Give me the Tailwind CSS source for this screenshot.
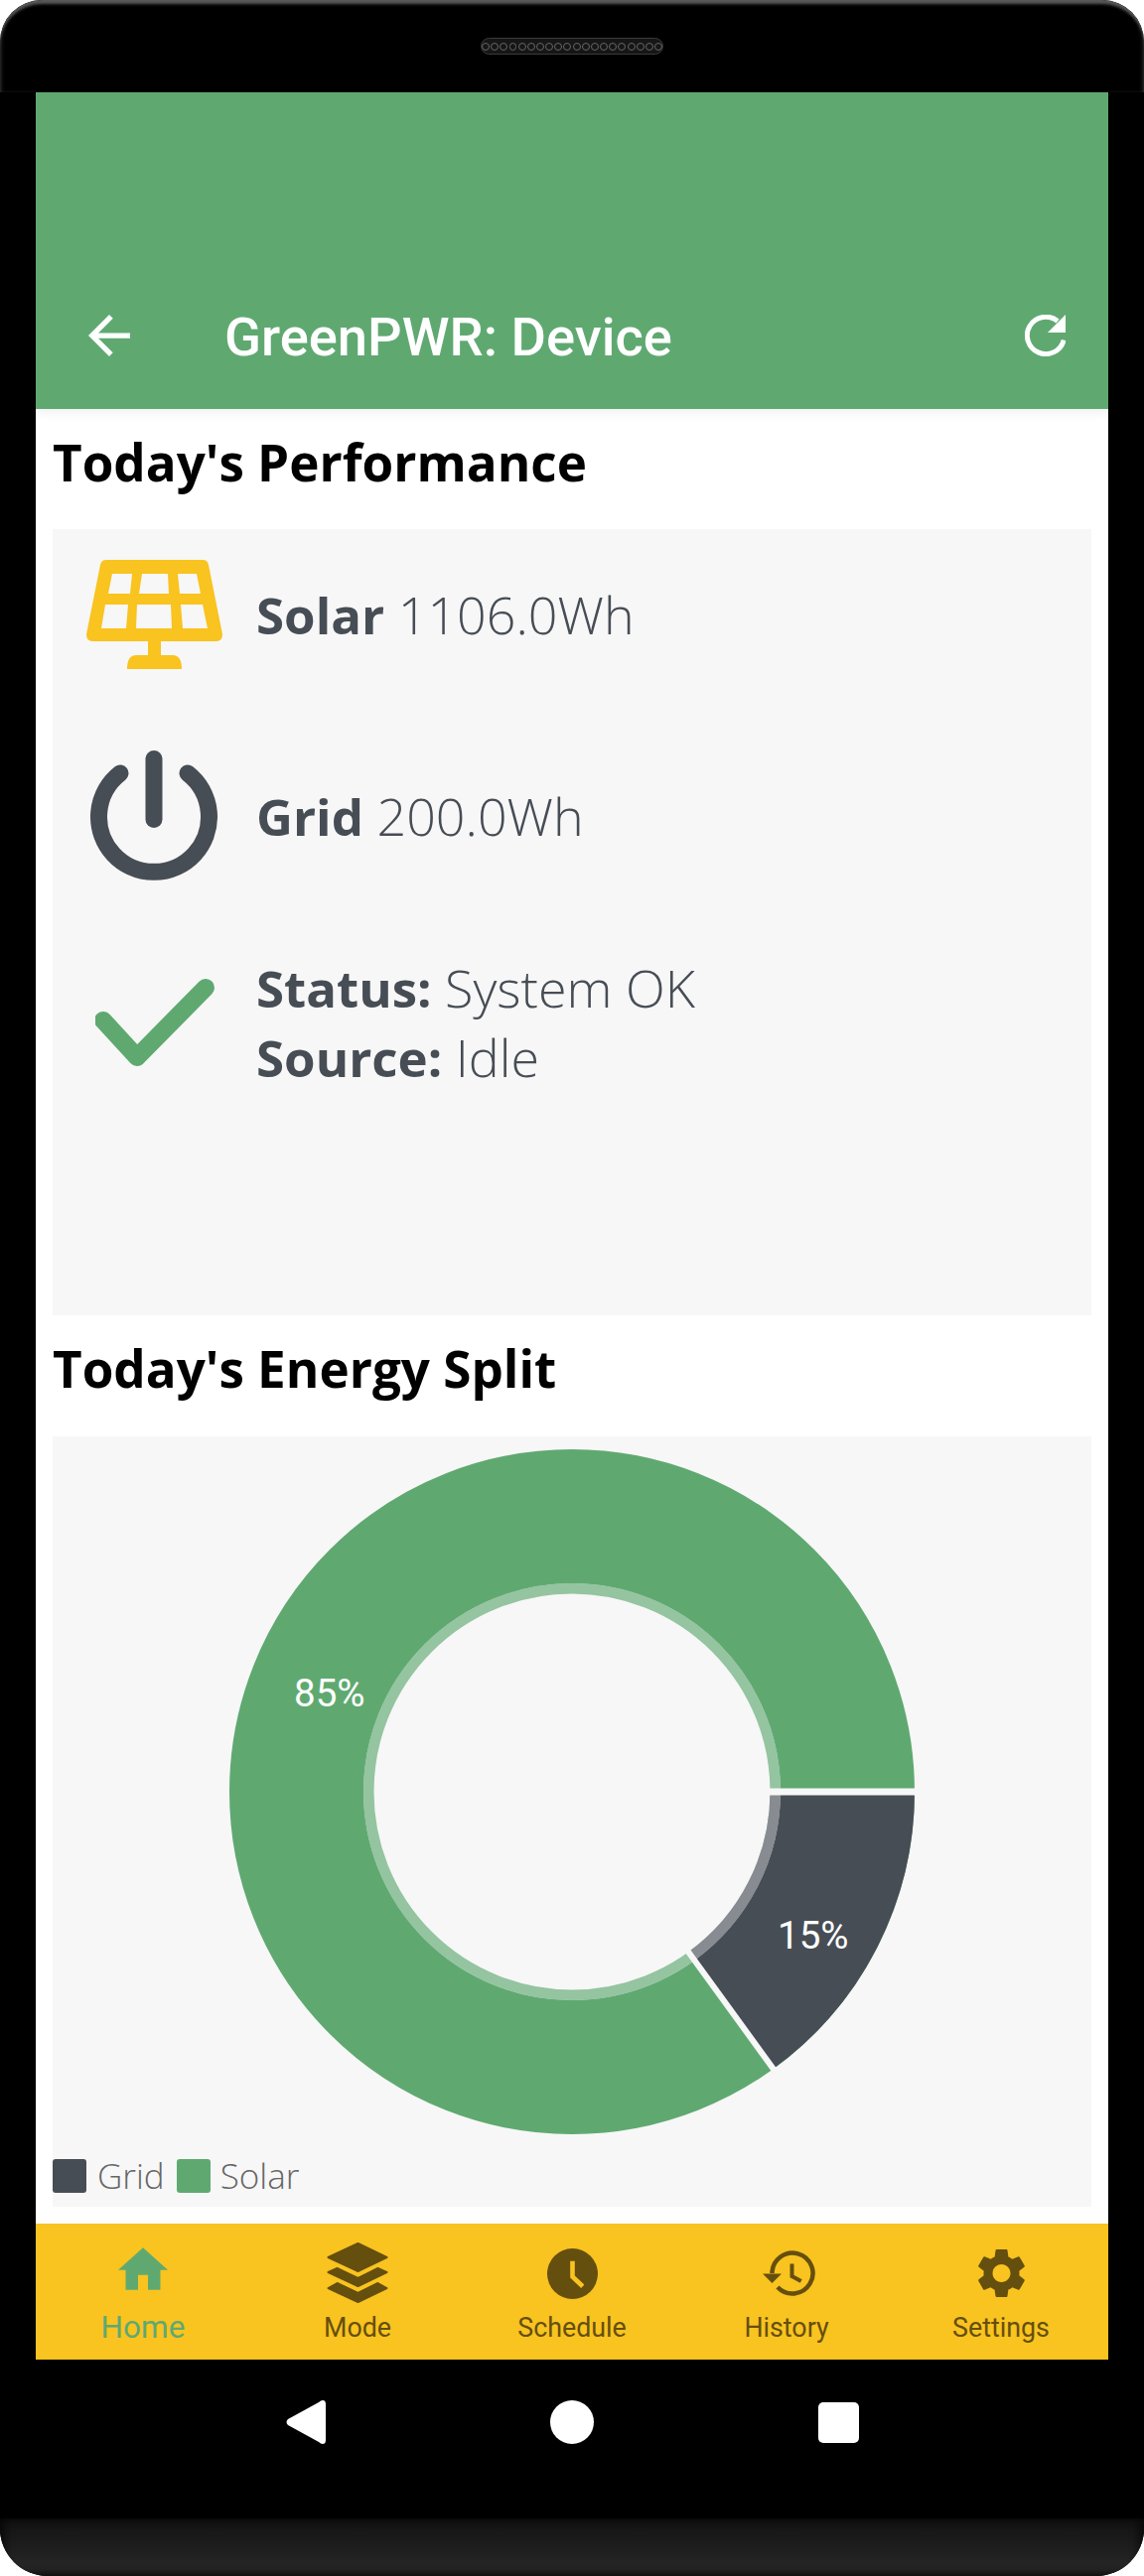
<!DOCTYPE html>
<html lang="en">
<head>
    <meta charset="UTF-8">
    <title>GreenPWR: Device</title>
    <script src="https://cdn.jsdelivr.net/npm/@tailwindcss/browser@4"></script>
</head>
<body class="bg-white">
    <div class="w-[1152px] h-[2595px] flex flex-col overflow-hidden rounded-t-[42px] rounded-b-[48px] bg-black">
        <!-- top bezel with speaker -->
        <div class="h-[93px] flex items-start justify-center pt-[38px] rounded-t-[42px] shadow-[inset_0_5px_3px_-1px_#585858,inset_3px_0_4px_-2px_#2c2c2c,inset_-3px_0_4px_-2px_#2c2c2c]">
            <div class="w-[184px] h-[17px] rounded-full border border-[#3a3a3a] bg-[#161616] flex items-center justify-center gap-[1.2px]">
                <span class="w-2 h-2 rounded-full border border-[#666]"></span><span class="w-2 h-2 rounded-full border border-[#666]"></span><span class="w-2 h-2 rounded-full border border-[#666]"></span><span class="w-2 h-2 rounded-full border border-[#666]"></span><span class="w-2 h-2 rounded-full border border-[#666]"></span><span class="w-2 h-2 rounded-full border border-[#666]"></span><span class="w-2 h-2 rounded-full border border-[#666]"></span><span class="w-2 h-2 rounded-full border border-[#666]"></span><span class="w-2 h-2 rounded-full border border-[#666]"></span><span class="w-2 h-2 rounded-full border border-[#666]"></span><span class="w-2 h-2 rounded-full border border-[#666]"></span><span class="w-2 h-2 rounded-full border border-[#666]"></span><span class="w-2 h-2 rounded-full border border-[#666]"></span><span class="w-2 h-2 rounded-full border border-[#666]"></span><span class="w-2 h-2 rounded-full border border-[#666]"></span><span class="w-2 h-2 rounded-full border border-[#666]"></span><span class="w-2 h-2 rounded-full border border-[#666]"></span><span class="w-2 h-2 rounded-full border border-[#666]"></span><span class="w-2 h-2 rounded-full border border-[#666]"></span><span class="w-2 h-2 rounded-full border border-[#666]"></span>
            </div>
        </div>

        <!-- screen -->
        <div class="mx-9 h-[2284px] bg-white flex flex-col">
            <header class="h-[319px] bg-[#5fa971] flex items-end pb-[41px] shadow-[0_4px_10px_rgba(0,0,0,0.06)]">
                <div class="h-[62px] w-full flex items-center">
                    <svg class="ml-[53px] mb-[4px]" width="42" height="42" viewBox="4 4 16 16" fill="#fff"><path d="M20 11H7.83l5.59-5.59L12 4l-8 8 8 8 1.41-1.41L7.83 13H20v-2z"/></svg>
                    <h1 class="ml-[95px] font-['Roboto',sans-serif] font-medium text-[54.3px] leading-[62px] text-white">GreenPWR: Device</h1>
                    <svg class="ml-auto mr-[43px] mb-[4px]" width="41" height="42" viewBox="0 0 41 42" fill="none"><path d="M33 6.5A18.7 18.7 0 1 0 39.2 25.5" stroke="#fff" stroke-width="5"/><path d="M41 0V18H23z" fill="#fff"/></svg>
                </div>
            </header>

            <main class="flex-1 px-[17px] font-['Open_Sans',sans-serif]">
                <h2 class="h-[121px] pt-[19px] text-[51.2px] leading-[68px] font-bold text-black">Today's Performance</h2>
                <section class="h-[792px] bg-[#f7f7f7] pt-[14px] text-[52px] leading-[70px] text-[#474d55] font-[360]">
                    <div class="flex items-center h-[144px]">
                        <div class="w-[205px] pl-[34px] shrink-0">
                            <svg class="block" width="137" height="110" viewBox="0 0 137 110"><path fill-rule="evenodd" fill="#f9c320" d="M20 0h97q5 0 6 5l14 70q0 7-6 7H6q-6 0-6-7L14 5q1-5 6-5ZM26 14l-4 20h22l2-20ZM56 14l-3 20h30l-1-20ZM92 14l2 20h21l-4-20ZM19 45l-4 24h25l2-24ZM51 45l-1 24h36l-1-24ZM95 45l2 24h25l-5-24Z"/><path fill="#f9c320" d="M62 82h13v14h12q9 0 9 14H41q0-14 9-14h12z"/></svg>
                        </div>
                        <p><b class="font-bold text-[51px]">Solar</b> 1106.0Wh</p>
                    </div>
                    <div class="flex items-center h-[144px] mt-[59px]">
                        <div class="w-[205px] pl-[38px] shrink-0">
                            <svg class="block" width="128" height="133" viewBox="0 0 128 133" fill="none" stroke="#474d55" stroke-width="17" stroke-linecap="round"><path d="M30 23A55.5 55.5 0 1 0 98 23"/><path d="M64 8.5V69.5"/></svg>
                        </div>
                        <p><b class="font-bold text-[51px]">Grid</b> 200.0Wh</p>
                    </div>
                    <div class="flex items-center h-[140px] mt-[66px]">
                        <div class="w-[205px] pl-[43px] shrink-0">
                            <svg class="block" width="120" height="92" viewBox="0 0 120 92" fill="none" stroke="#5fa971" stroke-width="18" stroke-linecap="round" stroke-linejoin="round"><path d="M8 44l34 37 69-70"/></svg>
                        </div>
                        <div>
                            <p><b class="font-bold text-[51px]">Status:</b> System OK</p>
                            <p><b class="font-bold text-[51px]">Source:</b> Idle</p>
                        </div>
                    </div>
                </section>

                <h2 class="h-[122px] pt-[19px] text-[51.2px] leading-[68px] font-bold text-black">Today's Energy Split</h2>
                <section class="h-[776px] bg-[#f7f7f7] flex flex-col">
                    <div class="h-[728px] relative">
                        <svg class="block" width="1046" height="728" viewBox="0 0 1046 728" fill="none">
                            <g transform="translate(523 358)">
                                <circle r="277.5" stroke="#5fa971" stroke-width="135"/>
                                <circle r="204.75" stroke="#5fa971" stroke-opacity="0.65" stroke-width="10.5"/>
                                <path d="M277.5 0A277.5 277.5 0 0 1 163.1 224.5" stroke="#474d55" stroke-width="135"/>
                                <path d="M204.75 0A204.75 204.75 0 0 1 120.4 165.6" stroke="#888b92" stroke-width="10.5"/>
                                <path d="M190 0H350" stroke="#f7f7f7" stroke-width="7"/>
                                <path d="M111.7 153.7 205.7 283.2" stroke="#f7f7f7" stroke-width="6"/>
                            </g>
                        </svg>
                        <span class="absolute left-[243px] top-[237px] font-['Roboto',sans-serif] text-[38.5px] leading-[44px] text-white">85%</span>
                        <span class="absolute left-[730px] top-[481px] font-['Roboto',sans-serif] text-[38.5px] leading-[44px] text-white">15%</span>
                    </div>
                    <div class="flex items-center h-[34px] text-[35px] leading-[34px] text-[#666] font-[350]">
                        <span class="w-[34px] h-[34px] rounded-[3px] bg-[#474d55]"></span>
                        <span class="ml-[11px]">Grid</span>
                        <span class="w-[34px] h-[34px] rounded-[3px] bg-[#5fa971] ml-[12px]"></span>
                        <span class="ml-[10px]">Solar</span>
                    </div>
                </section>
            </main>

            <nav class="h-[137px] bg-[#f9c320] grid grid-cols-5 pt-[19px] font-['Roboto',sans-serif] text-[26.8px] leading-[36px] text-[#654f0e]">
                <a class="flex flex-col items-center text-[#5fa971]">
                    <span class="h-[62px] flex items-center mb-[6px]"><svg class="mb-[10px]" width="50" height="43" viewBox="2 3 20 17" fill="currentColor"><path d="M10 20v-6h4v6h5v-8h3L12 3 2 12h3v8z"/></svg></span>
                    <span class="text-[31.5px]">Home</span>
                </a>
                <a class="flex flex-col items-center">
                    <span class="h-[62px] flex items-center mb-[6px]"><svg width="62" height="62" viewBox="-0.5 0 62 62" fill="currentColor" stroke="currentColor" stroke-width="2" stroke-linejoin="round"><path d="M31 1 60 15 31 29 1 15z"/><path d="M10 26l21 10 20-10 9 4-29 14L1 30z"/><path d="M10 41l21 10 20-10 9 5-29 14L1 46z"/></svg></span>
                    <span>Mode</span>
                </a>
                <a class="flex flex-col items-center">
                    <span class="h-[62px] flex items-center mb-[6px]"><svg width="51" height="51" viewBox="0 0 52 52"><circle cx="26" cy="26" r="26" fill="currentColor"/><path d="M26 13v16l10.5 10" fill="none" stroke="#f9c320" stroke-width="4.7"/></svg></span>
                    <span>Schedule</span>
                </a>
                <a class="flex flex-col items-center">
                    <span class="h-[62px] flex items-center mb-[6px]"><svg class="ml-[5px]" width="53" height="46" viewBox="0 0 53 46" fill="none" stroke="currentColor"><path stroke-width="4.5" d="M9.5 23A20.5 20.5 0 1 1 15 37"/><path stroke="none" fill="currentColor" d="M0 23.5H19L9.5 33z"/><path stroke-width="4" d="M29.5 13.5V26l9.2 5"/></svg></span>
                    <span>History</span>
                </a>
                <a class="flex flex-col items-center">
                    <span class="h-[62px] flex items-center mb-[6px]"><svg width="47" height="50" viewBox="2.6 2 18.8 20" fill="currentColor"><path d="M19.14 12.94c.04-.3.06-.61.06-.94 0-.32-.02-.64-.07-.94l2.03-1.58c.18-.14.23-.41.12-.61l-1.92-3.32c-.12-.22-.37-.29-.59-.22l-2.39.96c-.5-.38-1.03-.7-1.62-.94l-.36-2.54c-.04-.24-.24-.41-.48-.41h-3.84c-.24 0-.43.17-.47.41l-.36 2.54c-.59.24-1.13.57-1.62.94l-2.39-.96c-.22-.08-.47 0-.59.22L2.74 8.87c-.12.21-.08.47.12.61l2.03 1.58c-.05.3-.09.63-.09.94s.02.64.07.94l-2.03 1.58c-.18.14-.23.41-.12.61l1.92 3.32c.12.22.37.29.59.22l2.39-.96c.5.38 1.03.7 1.62.94l.36 2.54c.05.24.24.41.48.41h3.84c.24 0 .44-.17.47-.41l.36-2.54c.59-.24 1.13-.56 1.62-.94l2.39.96c.22.08.47 0 .59-.22l1.92-3.32c.12-.22.07-.47-.12-.61l-2.01-1.58zM12 15.6c-1.98 0-3.6-1.62-3.6-3.6s1.62-3.6 3.6-3.6 3.6 1.62 3.6 3.6-1.62 3.6-3.6 3.6z"/></svg></span>
                    <span>Settings</span>
                </a>
            </nav>
        </div>

        <!-- android nav keys -->
        <div class="h-[160px] flex items-start justify-center gap-[226px] pt-[41px]">
            <svg width="40" height="44" viewBox="0 0 40 44"><path fill="#fff" d="M37 0q3 0 3 4v36q0 4-3 4-2 0-4-2L2 25q-3-3 0-6L33 2q2-2 4-2z"/></svg>
            <div class="w-[44px] h-[44px] rounded-full bg-white"></div>
            <div class="w-[41px] h-[41px] mt-[2px] rounded-[5px] bg-white"></div>
        </div>
        <div class="flex-1 bg-gradient-to-b from-[#121212] to-[#2a2a2a] shadow-[inset_0_-3px_8px_rgba(0,0,0,0.5),inset_6px_0_8px_rgba(0,0,0,0.4),inset_-6px_0_8px_rgba(0,0,0,0.4)]"></div>
    </div>
</body>
</html>
